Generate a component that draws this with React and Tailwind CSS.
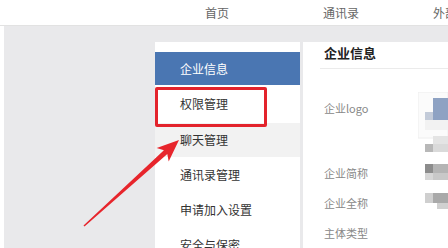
import React from 'react';

const menu = [
  { label: '企业信息', h: 'h-[33px]', cls: 'bg-[#4a76b2] text-white' },
  { label: '权限管理', h: 'h-[38px]', cls: 'bg-white text-[#333]' },
  { label: '聊天管理', h: 'h-[34px]', cls: 'bg-[#f2f2f2] text-[#333]' },
  { label: '通讯录管理', h: 'h-[35px]', cls: 'bg-white text-[#333]' },
  { label: '申请加入设置', h: 'h-[35px]', cls: 'bg-white text-[#333]' },
  { label: '安全与保密', h: 'h-[35px]', cls: 'bg-white text-[#333]' },
];

function Mosaic() {
  return (
    <svg className="absolute left-[418px] top-[92px]" width="30" height="125" viewBox="0 0 30 125">
      <rect x="0" y="0" width="30" height="46" fill="#fbfbfb" stroke="#eeeeee" />
      <rect x="15" y="6" width="15" height="22" fill="#8ea2c3" />
      <rect x="7" y="20" width="8" height="8" fill="#c3cbd9" />
      <rect x="7" y="28" width="23" height="10" fill="#f2f2f2" />
      <rect x="15" y="44" width="15" height="8" fill="#e4e4e4" />
      <rect x="7" y="52" width="8" height="8" fill="#b8b8b8" />
      <rect x="15" y="52" width="15" height="8" fill="#dadada" />
      <rect x="7" y="72" width="8" height="9" fill="#8c8c8c" />
      <rect x="15" y="72" width="15" height="9" fill="#b4b4b4" />
      <rect x="7" y="81" width="8" height="7" fill="#d6d6d6" />
      <rect x="15" y="81" width="15" height="7" fill="#c8c8c8" />
      <rect x="7" y="101" width="8" height="10" fill="#cfcfcf" />
      <rect x="15" y="101" width="15" height="10" fill="#a9a9a9" />
      <rect x="19" y="111" width="11" height="6" fill="#d0d0d0" />
    </svg>
  );
}

function Arrow() {
  return (
    <svg className="absolute left-0 top-0 pointer-events-none" width="448" height="248" viewBox="0 0 448 248">
      <polygon
        points="84.5,226.5 167.3,154 168.7,161.5 179,140 156.7,148.1 163.9,150.2 83.5,225.5"
        fill="#e7252c"
      />
    </svg>
  );
}

export default function App() {
  return (
    <div className="relative w-[448px] h-[248px] overflow-hidden bg-white font-['Noto_Sans_CJK_SC','Noto_Sans',sans-serif]">
      {/* top nav */}
      <div className="h-[26px] flex items-center text-[12px] text-[#666] border-b border-[#e2e2e2] whitespace-nowrap">
        <span className="ml-[205px] shrink-0">首页</span>
        <span className="ml-[94px] shrink-0">通讯录</span>
        <span className="ml-[74px] shrink-0">外部联系人</span>
      </div>

      {/* body */}
      <div className="ml-[4px] h-[222px] bg-[#e9e9eb] flex pt-[16px] pl-[151px]">
        <div className="w-[145px] bg-white pt-[10px] flex flex-col">
          {menu.map((m) => (
            <div key={m.label} className={`${m.h} ${m.cls} shrink-0 flex items-center pl-[25px] text-[12px]`}>
              {m.label}
            </div>
          ))}
        </div>

        <div className="ml-[3px] flex-1 bg-white flex flex-col">
          <div className="ml-[17px] h-[36px] pl-[4px] flex items-end pb-[6px] border-b border-[#ebebeb] text-[13px] font-bold text-[#222]">
            企业信息
          </div>
          <div className="pl-[21px] pt-[5px] text-[11px] text-[#888] flex flex-col">
            <div className="h-[68px] flex items-center">企业logo</div>
            <div className="mt-[16px] h-[30px] flex items-center">企业简称</div>
            <div className="h-[30px] flex items-center">企业全称</div>
            <div className="h-[30px] flex items-center">主体类型</div>
          </div>
        </div>
      </div>

      <Mosaic />

      {/* annotation box */}
      <div className="absolute left-[155px] top-[87px] w-[112px] h-[40px] border-[3px] border-[#e3232c] rounded-[2px]" />
      <Arrow />
    </div>
  );
}
